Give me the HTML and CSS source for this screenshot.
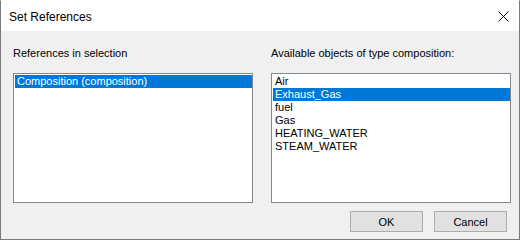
FILE: index.html
```html
<!DOCTYPE html>
<html lang="en">
<head>
    <meta charset="UTF-8">
    <title>Set References</title>
    <link rel="stylesheet" href="styles.css">
</head>
<body>
    <div class="window">
        <div class="titlebar">
            <span class="title">Set References</span>
            <svg class="close" width="11" height="11" viewBox="0 0 11 11">
                <path d="M0.5 0.5 L10.5 10.5 M10.5 0.5 L0.5 10.5" stroke="#000" stroke-width="1" fill="none"/>
            </svg>
        </div>

        <div class="content">
            <div class="columns">
                <div class="column">
                    <div class="label">References in selection</div>
                    <div class="listbox">
                        <div class="item selected">Composition (composition)</div>
                    </div>
                </div>
                <div class="column">
                    <div class="label">Available objects of type composition:</div>
                    <div class="listbox">
                        <div class="item">Air</div>
                        <div class="item selected">Exhaust_Gas</div>
                        <div class="item">fuel</div>
                        <div class="item">Gas</div>
                        <div class="item">HEATING_WATER</div>
                        <div class="item">STEAM_WATER</div>
                    </div>
                </div>
            </div>

            <div class="footer">
                <button class="btn">OK</button>
                <button class="btn">Cancel</button>
            </div>
        </div>
    </div>
</body>
</html>
```

FILE: styles.css
```css
* {
    margin: 0;
    padding: 0;
    box-sizing: border-box;
}

body {
    width: 520px;
    height: 240px;
    overflow: hidden;
    background: #f0f0f0;
    font-family: "Liberation Sans", Arial, sans-serif;
    font-size: 11px;
    color: #000;
}

.window {
    width: 520px;
    height: 240px;
    border: 1px solid #7a7a7a;
    border-top-color: #ffffff;
    background: #f0f0f0;
    display: flex;
    flex-direction: column;
}

.titlebar {
    height: 30px;
    background: #ffffff;
    display: flex;
    align-items: center;
    justify-content: space-between;
    padding: 0 10px 0 8px;
}

.title {
    font-size: 12px;
    padding-top: 1px;
}

.close {
    display: block;
    margin-top: 1px;
}

.content {
    padding: 16px 8px 0 12px;
}

.columns {
    display: grid;
    grid-template-columns: 240px 240px;
    gap: 18px;
}

.label {
    height: 13px;
    line-height: 13px;
    margin-bottom: 13px;
}

.listbox {
    height: 130px;
    background: #ffffff;
    border: 1px solid #828790;
    padding: 1px 0 1px 1px;
}

.item {
    height: 13px;
    line-height: 13px;
    padding-left: 2px;
    white-space: nowrap;
}

.item.selected {
    background: #0078d7;
    color: #ffffff;
}

.footer {
    display: flex;
    justify-content: flex-end;
    gap: 11px;
    margin-top: 8px;
    padding-right: 4px;
}

.btn {
    width: 73px;
    height: 21px;
    background: #e1e1e1;
    border: 1px solid #adadad;
    font-family: "Liberation Sans", Arial, sans-serif;
    font-size: 11px;
    color: #000;
}
```
